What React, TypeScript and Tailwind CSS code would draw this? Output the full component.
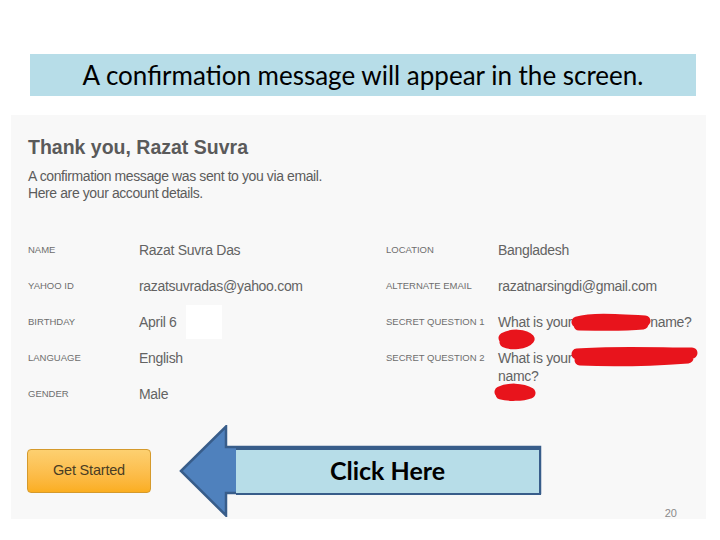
import type { ReactNode } from "react"

type Row = { label: string; value: ReactNode }

function Scribble({ w, h, d }: { w: number; h: number; d: string }) {
    return (
        <svg width={w} height={h} viewBox={`0 0 ${w} ${h}`} className="absolute">
            <path d={d} fill="none" stroke="#e8141c" strokeLinecap="round" strokeLinejoin="round" strokeWidth="11" />
        </svg>
    )
}

const leftRows: Row[] = [
    { label: "Name", value: "Razat Suvra Das" },
    { label: "Yahoo ID", value: "razatsuvradas@yahoo.com" },
    {
        label: "Birthday",
        value: (
            <span className="relative block">
                April 6
                <span className="absolute left-[47px] -top-[8px] w-[36px] h-[34px] bg-white" />
            </span>
        ),
    },
    { label: "Language", value: "English" },
    { label: "Gender", value: "Male" },
]

const rightRows: Row[] = [
    { label: "Location", value: "Bangladesh" },
    { label: "Alternate Email", value: "razatnarsingdi@gmail.com" },
    {
        label: "Secret Question 1",
        value: (
            <span className="relative block">
                What is your
                <span className="relative inline-block w-[78px] h-[18px] align-top">
                    <span className="absolute -left-[1px] -top-[2px]">
                        <Scribble w={80} h={22} d="M6 11 C20 7, 40 8, 74 10 M8 14 C30 14, 50 15, 72 13" />
                    </span>
                </span>
                name?
                <span className="absolute left-[-1px] top-[16px]">
                    <Scribble w={40} h={22} d="M7 9 C14 5, 28 5, 32 10 C28 15, 14 16, 8 13" />
                </span>
            </span>
        ),
    },
    {
        label: "Secret Question 2",
        value: (
            <span className="relative block w-[200px]">
                What is your
                <span className="absolute left-[72px] -top-[4px]">
                    <Scribble w={130} h={26} d="M7 9 C40 6, 90 8, 122 8 M10 15 C50 17, 90 15, 118 13" />
                </span>
                <br />
                namc?
                <span className="absolute left-[-6px] top-[34px]">
                    <Scribble w={46} h={20} d="M8 9 C16 5, 30 5, 38 10 C30 13, 16 13, 9 11" />
                </span>
            </span>
        ),
    },
]

function DetailRow({ row, labelWidth }: { row: Row; labelWidth: string }) {
    return (
        <div className="flex h-[36px] pt-[9px]">
            <div className={`${labelWidth} h-[18px] leading-[18px] text-[9.5px] uppercase text-[#6e6e6e] shrink-0`}>
                {row.label}
            </div>
            <div className="text-[14px] leading-[18px] text-[#636363] tracking-[-0.3px]">{row.value}</div>
        </div>
    )
}

export default function App() {
    return (
        <div className="w-[720px] h-[540px] bg-white overflow-hidden flex flex-col">

            <div className="mt-[54px] ml-[30px] w-[666px] h-[42px] bg-[#b7dde8] flex items-center justify-center font-['Lato',sans-serif] text-[26px] text-black">
                A confirmation message will appear in the screen.
            </div>

            <div className="mt-[19px] ml-[11px] w-[695px] h-[404px] bg-[#f8f8f8] flex flex-col pt-[21px] pl-[17px] font-['Liberation_Sans',Arial,sans-serif]">

                <h1 className="text-[19.5px] leading-[22px] font-bold text-[#5a5a5a]">
                    Thank you, Razat Suvra
                </h1>

                <p className="mt-[10px] text-[14px] leading-[17px] text-[#5c5c5c] tracking-[-0.4px]">
                    A confirmation message was sent to you via email.
                    <br />
                    Here are your account details.
                </p>

                <div className="mt-[30px] flex">
                    <div className="w-[358px]">
                        {leftRows.map((r) => (
                            <DetailRow key={r.label} row={r} labelWidth="w-[111px]" />
                        ))}
                    </div>
                    <div>
                        {rightRows.map((r) => (
                            <DetailRow key={r.label} row={r} labelWidth="w-[112px]" />
                        ))}
                    </div>
                </div>

                <div className="mt-[13px] flex items-center h-[92px]">

                    <button className="-ml-px w-[124px] h-[44px] rounded-[4px] border border-[#d59a2c] bg-gradient-to-b from-[#fdd070] to-[#fbae1f] text-[14.5px] text-[#4a3d24] tracking-[-0.2px]">
                        Get Started
                    </button>

                    <div className="relative ml-[28px] w-[363px] h-[92px] flex items-center">
                        <svg width="363" height="92" viewBox="0 0 363 92" className="absolute inset-0">
                            <polygon
                                points="2,46 47,1.5 47,22 361,22 361,68 47,68 47,90.5"
                                fill="#4f81bd"
                                stroke="#385d8a"
                                strokeWidth="2.5"
                            />
                        </svg>
                        <div className="relative ml-[57px] w-[305px] h-[47px] bg-[#b7dde8] border-y-[2.5px] border-r-[2.5px] border-[#385d8a] flex items-center justify-center font-['Lato',sans-serif] font-bold text-[25px] text-black">
                            Click Here
                        </div>
                    </div>

                    <div className="ml-auto mr-[29px] self-end -mb-[4px] text-[11px] text-[#8a8a8a]">
                        20
                    </div>

                </div>

            </div>

        </div>
    )
}
